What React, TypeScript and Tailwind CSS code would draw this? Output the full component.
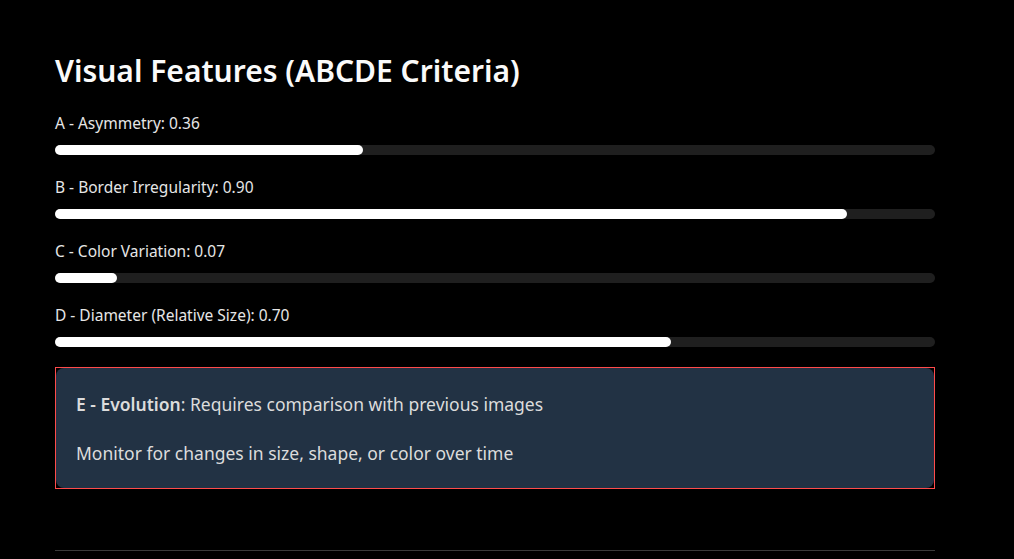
const features = [
  { label: 'A - Asymmetry: 0.36', value: 35 },
  { label: 'B - Border Irregularity: 0.90', value: 90 },
  { label: 'C - Color Variation: 0.07', value: 7 },
  { label: 'D - Diameter (Relative Size): 0.70', value: 70 },
];

export default function App() {
  return (
    <div className="min-h-[559px] w-full bg-black font-['Noto_Sans',sans-serif] text-[#fafafa]">
      <div className="ml-[55px] w-[880px] pt-[52px]">
        <h3 className="text-[30px] font-semibold leading-[38px]">
          Visual Features (ABCDE Criteria)
        </h3>

        <div className="mt-[23px] flex flex-col gap-[22px]">
          {features.map((f) => (
            <div key={f.label}>
              <div className="text-[15.5px] leading-[20px] text-[#e6e6e6]">{f.label}</div>
              <div className="mt-[12px] h-[10px] w-full rounded-full bg-[#1f1f1f]">
                <div
                  className="h-full rounded-full bg-white"
                  style={{ width: `${f.value}%` }}
                />
              </div>
            </div>
          ))}
        </div>

        <div className="mt-[20px] border border-[#ff4b4b]">
          <div className="rounded-lg bg-[#223244] px-[20px] pb-[23px] pt-[24px] text-[17.5px] leading-[24px] text-[#dcdcdc]">
            <p>
              <span className="font-semibold">E - Evolution</span>: Requires comparison with previous images
            </p>
            <p className="mt-[25px]">Monitor for changes in size, shape, or color over time</p>
          </div>
        </div>

        <hr className="mt-[61px] border-t border-[#3a3a3a]" />
      </div>
    </div>
  );
}
